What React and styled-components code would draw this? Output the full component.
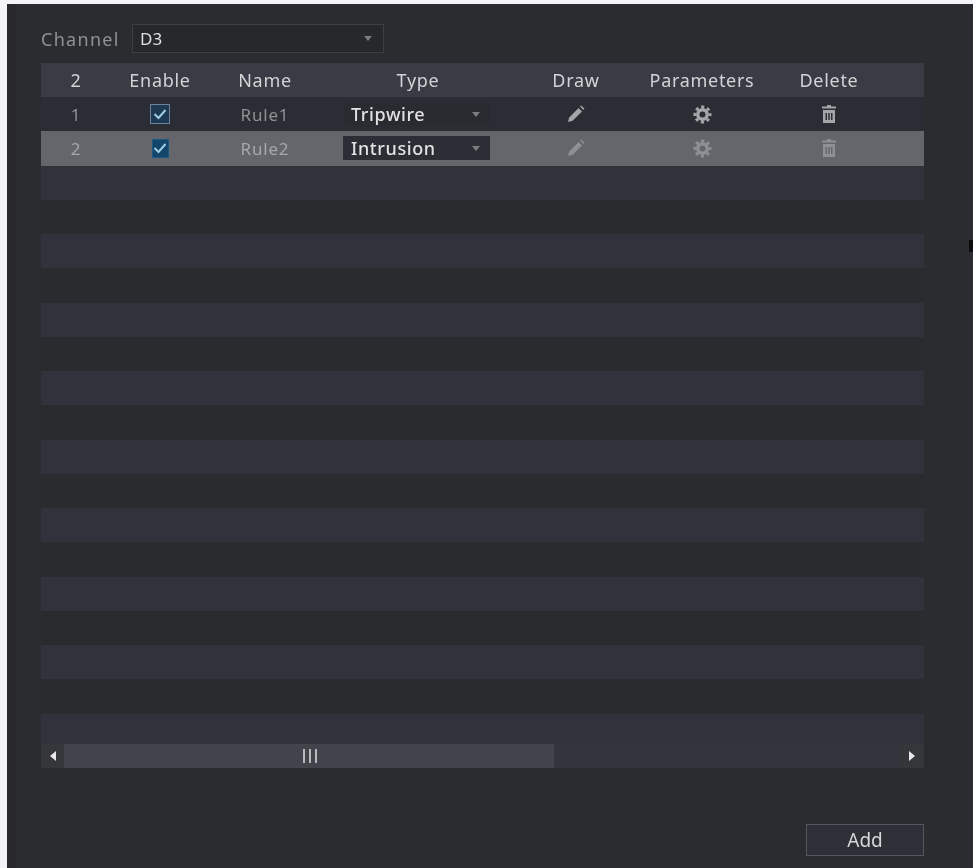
import React from 'react';
import styled, { createGlobalStyle } from 'styled-components';

const GlobalStyle = createGlobalStyle`
  html, body {
    margin: 0;
    padding: 0;
    background: #f4f4f6;
    overflow: hidden;
  }
`;

const Panel = styled.div`
  position: relative;
  box-sizing: border-box;
  width: 966px;
  height: 864px;
  margin: 4px 0 0 7px;
  padding: 20px 49px 12px 25px;
  border-left: 9px solid #29292b;
  background: #2a2c30;
  font-family: "Noto Sans", "Open Sans", sans-serif;
  filter: blur(0.5px);
`;

const ChannelRow = styled.div`
  display: flex;
  align-items: center;
  height: 29px;
  gap: 13px;
`;

const ChannelLabel = styled.span`
  width: 78px;
  font-size: 18px;
  letter-spacing: 1.3px;
  white-space: nowrap;
  color: #8f9195;
`;

const ChannelSelect = styled.div`
  box-sizing: border-box;
  display: flex;
  align-items: center;
  justify-content: space-between;
  width: 252px;
  height: 29px;
  padding: 0 11px 0 7px;
  border: 1px solid #3d3f44;
  background: #26282c;
  font-size: 17px;
  color: #dedede;
`;

const Arrow = styled.span`
  width: 0;
  height: 0;
  border-left: 4px solid transparent;
  border-right: 4px solid transparent;
  border-top: 5px solid #7b7d82;
`;

const Table = styled.div`
  margin-top: 10px;
  width: 883px;
`;

const columns = '70px 98px 112px 194px 122px 130px 124px 1fr';

const HeaderRow = styled.div`
  display: grid;
  grid-template-columns: ${columns};
  align-items: center;
  height: 34px;
  background: #393c44;
  font-size: 18px;
  letter-spacing: 0.7px;
  color: #d2d3d5;
  text-align: center;
`;

const RowList = styled.div`
  height: 647px;
  overflow: hidden;
`;

const toneColors = {
  plain: '#2b2d35',
  selected: '#64666b',
  light: '#31333c',
  dark: '#292b2e',
};

const Row = styled.div`
  display: grid;
  grid-template-columns: ${columns};
  align-items: center;
  justify-items: center;
  height: 34.25px;
  background: ${(props) => toneColors[props.$tone]};
  font-size: 17px;
  letter-spacing: 0.8px;
  color: ${(props) => (props.$tone === 'selected' ? '#a6a8ab' : '#8f9195')};
`;

const Check = styled.span`
  box-sizing: border-box;
  display: flex;
  align-items: center;
  justify-content: center;
  width: ${(props) => (props.$active ? 17 : 20)}px;
  height: ${(props) => (props.$active ? 19 : 20)}px;
  border: 1px solid ${(props) => (props.$active ? '#1c5a86' : '#6d8498')};
  background: ${(props) => (props.$active ? '#14466b' : '#1e3a52')};
`;

const TypeSelect = styled.div`
  box-sizing: border-box;
  display: flex;
  align-items: center;
  justify-content: space-between;
  width: 147px;
  height: 24px;
  margin-right: 3px;
  padding: 0 10px 0 8px;
  background: ${(props) => (props.$active ? '#2c2e36' : '#292b31')};
  font-size: 18px;
  font-weight: 500;
  letter-spacing: 0.6px;
  color: #e2e2e2;
`;

const IconSlot = styled.span`
  display: flex;
  color: ${(props) => (props.$active ? '#8e9093' : '#a4a6a9')};
`;

const ScrollBar = styled.div`
  display: flex;
  height: 24px;
  background: #33353c;
`;

const ScrollButton = styled.div`
  display: flex;
  align-items: center;
  justify-content: center;
  width: ${(props) => props.$width}px;
  background: #34363a;
`;

const ScrollThumb = styled.div`
  display: flex;
  align-items: center;
  justify-content: center;
  gap: 4px;
  width: 490px;
  padding-left: 2px;
  box-sizing: border-box;
  background: #42444c;
`;

const Grip = styled.span`
  width: 2px;
  height: 14px;
  background: #b8b9bc;
`;

const ScrollTrack = styled.div`
  flex: 1;
`;

const Footer = styled.div`
  display: flex;
  justify-content: flex-end;
  width: 883px;
  margin-top: 56px;
`;

const AddButton = styled.button`
  width: 118px;
  height: 32px;
  padding: 0;
  border: 1px solid #55575c;
  background: #2e3038;
  font-family: inherit;
  font-size: 19px;
  color: #d8d8d8;
`;

const EdgeMark = styled.span`
  position: absolute;
  top: 236px;
  right: 0;
  width: 4px;
  height: 12px;
  background: #0d0d0e;
`;

function Pencil() {
  return (
    <svg width="18" height="18" viewBox="0 0 18 18" fill="currentColor">
      <path d="M1 17l1.2-4.6L11.6 3l3.4 3.4L5.6 15.8z" />
      <path d="M13 1.6l1.2-1.1 3.3 3.3-1.1 1.2z" />
    </svg>
  );
}

function Gear() {
  return (
    <svg width="19" height="19" viewBox="0 0 20 20" fill="none" stroke="currentColor">
      <circle cx="10" cy="10" r="5" strokeWidth="3.6" />
      <circle cx="10" cy="10" r="8" strokeWidth="3" strokeDasharray="3.3 2.98" strokeDashoffset="1.65" />
    </svg>
  );
}

function Trash() {
  return (
    <svg width="16" height="18" viewBox="0 0 16 18" fill="currentColor">
      <path d="M6 0h4v1.5h5V3.5H1V1.5h5z" />
      <path d="M2 5h12v13H2zM4.5 8v7h1.5V8zM7.25 8v7h1.5V8zM10 8v7h1.5V8z" fillRule="evenodd" />
    </svg>
  );
}

function CheckMark() {
  return (
    <svg width="14" height="12" viewBox="0 0 14 12" fill="none" stroke="#a0cde4" strokeWidth="2">
      <path d="M1.5 6l4 4 7-8" />
    </svg>
  );
}

const rules = [
  { id: 1, name: 'Rule1', type: 'Tripwire', tone: 'plain' },
  { id: 2, name: 'Rule2', type: 'Intrusion', tone: 'selected' },
];

const emptyRows = Array.from({ length: 17 }, (_, i) => (i % 2 === 0 ? 'light' : 'dark'));

function App() {
  return (
    <>
      <GlobalStyle />
      <Panel>
        <EdgeMark />
        <ChannelRow>
          <ChannelLabel>Channel</ChannelLabel>
          <ChannelSelect>
            D3
            <Arrow />
          </ChannelSelect>
        </ChannelRow>
        <Table>
          <HeaderRow>
            <span>2</span>
            <span>Enable</span>
            <span>Name</span>
            <span>Type</span>
            <span>Draw</span>
            <span>Parameters</span>
            <span>Delete</span>
          </HeaderRow>
          <RowList>
            {rules.map((rule) => {
              const active = rule.tone === 'selected';
              return (
                <Row key={rule.id} $tone={rule.tone}>
                  <span>{rule.id}</span>
                  <Check $active={active}>
                    <CheckMark />
                  </Check>
                  <span>{rule.name}</span>
                  <TypeSelect $active={active}>
                    {rule.type}
                    <Arrow />
                  </TypeSelect>
                  <IconSlot $active={active}>
                    <Pencil />
                  </IconSlot>
                  <IconSlot $active={active}>
                    <Gear />
                  </IconSlot>
                  <IconSlot $active={active}>
                    <Trash />
                  </IconSlot>
                </Row>
              );
            })}
            {emptyRows.map((tone, i) => (
              <Row key={i} $tone={tone} />
            ))}
          </RowList>
          <ScrollBar>
            <ScrollButton $width={23}>
              <svg width="8" height="10" viewBox="0 0 8 10" fill="#e8e8e8">
                <path d="M7 0v10L1 5z" />
              </svg>
            </ScrollButton>
            <ScrollThumb>
              <Grip />
              <Grip />
              <Grip />
            </ScrollThumb>
            <ScrollTrack />
            <ScrollButton $width={25}>
              <svg width="8" height="10" viewBox="0 0 8 10" fill="#e8e8e8">
                <path d="M1 0v10l6-5z" />
              </svg>
            </ScrollButton>
          </ScrollBar>
        </Table>
        <Footer>
          <AddButton>Add</AddButton>
        </Footer>
      </Panel>
    </>
  );
}

export default App;
